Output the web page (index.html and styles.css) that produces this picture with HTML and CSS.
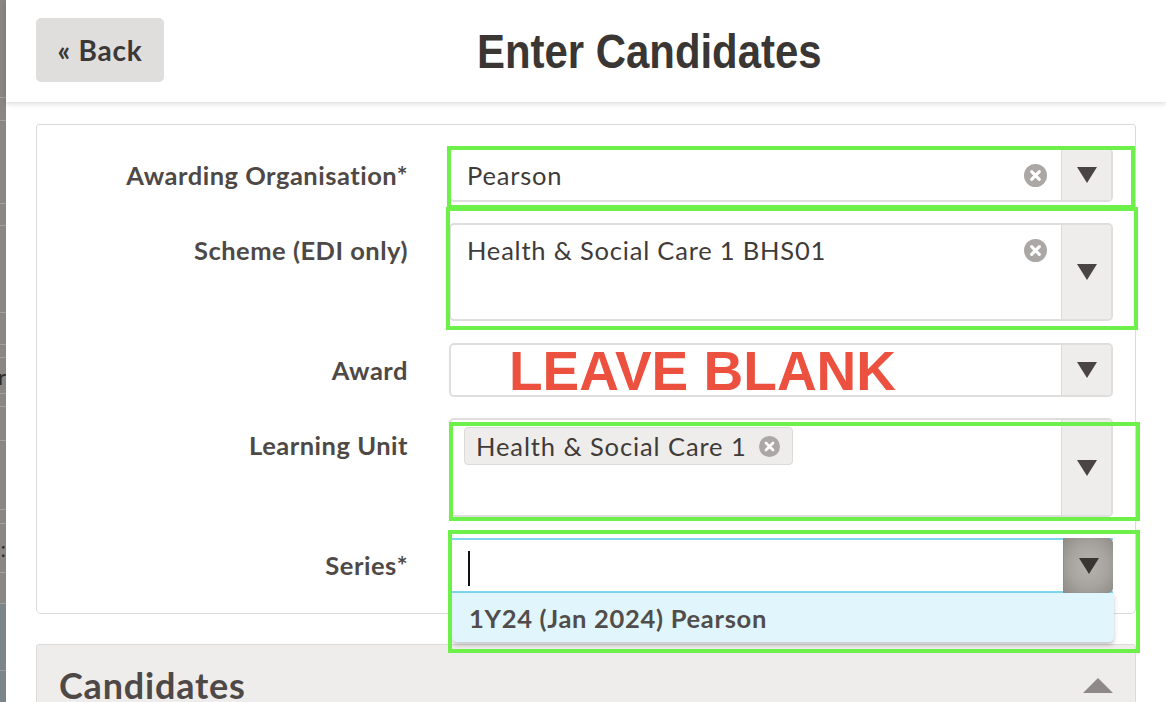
FILE: index.html
```html
<!DOCTYPE html>
<html lang="en">
<head>
<meta charset="utf-8">
<title>Enter Candidates</title>
<link rel="stylesheet" href="styles.css">
</head>
<body>
<div class="strip">
  <div class="strip-row h98"></div>
  <div class="strip-row h23"></div>
  <div class="strip-row h83"></div>
  <div class="strip-row h22"></div>
  <div class="strip-row h87"></div>
  <div class="strip-row h32"></div>
  <div class="strip-row h13"></div>
  <div class="strip-row h36 txt"><span>Order</span></div>
  <div class="strip-row h13"></div>
  <div class="strip-row h34"></div>
  <div class="strip-row h69"></div>
  <div class="strip-row h14"></div>
  <div class="strip-row h49 txt"><span>Status:</span></div>
  <div class="strip-row h31"></div>
  <div class="strip-row blue h67"></div>
  <div class="strip-row blue rest"></div>
</div>

<div class="main">
  <header class="topbar">
    <a class="back" href="#">« Back</a>
    <h1 class="title">Enter Candidates</h1>
  </header>

  <div class="content">
    <section class="panel form">
      <div class="row">
        <label class="label">Awarding Organisation*</label>
        <div class="select h54">
          <span class="value">Pearson</span>
          <span class="clear"><svg viewBox="0 0 24 24" width="23" height="23"><circle cx="12" cy="12" r="12" fill="#aaa7a4"/><path d="M8 8 L16 16 M16 8 L8 16" stroke="#fff" stroke-width="3.2" stroke-linecap="round"/></svg></span>
          <span class="arrow"><svg viewBox="0 0 20 16" width="20" height="16"><polygon points="0,0 20,0 10,16" fill="#4a4543"/></svg></span>
        </div>
      </div>

      <div class="row">
        <label class="label">Scheme (EDI only)</label>
        <div class="select h98">
          <span class="value">Health &amp; Social Care 1 BHS01</span>
          <span class="clear"><svg viewBox="0 0 24 24" width="23" height="23"><circle cx="12" cy="12" r="12" fill="#aaa7a4"/><path d="M8 8 L16 16 M16 8 L8 16" stroke="#fff" stroke-width="3.2" stroke-linecap="round"/></svg></span>
          <span class="arrow"><svg viewBox="0 0 20 16" width="20" height="16"><polygon points="0,0 20,0 10,16" fill="#4a4543"/></svg></span>
        </div>
      </div>

      <div class="row gap-plus">
        <label class="label">Award</label>
        <div class="select h54">
          <span class="value"></span>
          <span class="arrow"><svg viewBox="0 0 20 16" width="20" height="16"><polygon points="0,0 20,0 10,16" fill="#4a4543"/></svg></span>
        </div>
      </div>

      <div class="row">
        <label class="label">Learning Unit</label>
        <div class="select h99">
          <span class="value tags">
            <span class="tag">Health &amp; Social Care 1
              <svg class="tag-x" viewBox="0 0 24 24" width="21" height="21"><circle cx="12" cy="12" r="12" fill="#aaa7a4"/><path d="M8 8 L16 16 M16 8 L8 16" stroke="#fff" stroke-width="3.2" stroke-linecap="round"/></svg>
            </span>
          </span>
          <span class="arrow"><svg viewBox="0 0 20 16" width="20" height="16"><polygon points="0,0 20,0 10,16" fill="#4a4543"/></svg></span>
        </div>
      </div>

      <div class="row">
        <label class="label">Series*</label>
        <div class="select h55 focused">
          <span class="value"><span class="cursor"></span></span>
          <span class="arrow open"><svg viewBox="0 0 20 16" width="20" height="16"><polygon points="0,0 20,0 10,16" fill="#393533"/></svg></span>
          <div class="dropdown">1Y24 (Jan 2024) Pearson</div>
        </div>
      </div>
    </section>

    <section class="panel candidates">
      <h2 class="cand-title">Candidates</h2>
      <svg class="up" viewBox="0 0 30 15" width="30" height="15"><polygon points="15,0 30,15 0,15" fill="#8e8986"/></svg>
    </section>
  </div>
</div>

<div class="note note-text">LEAVE BLANK</div>
<div class="note box b1"></div>
<div class="note box b2"></div>
<div class="note box b3"></div>
<div class="note box b4"></div>
</body>
</html>
```

FILE: styles.css
```css
html, body {
  margin: 0;
  padding: 0;
  background: #ffffff;
}
body {
  position: relative;
  display: flex;
  width: 1166px;
  height: 702px;
  overflow: hidden;
  font-family: "Lato", "Noto Sans", sans-serif;
  color: #3f3b39;
}

/* left strip (page behind) */
.strip {
  flex: 0 0 6px;
  width: 6px;
  display: flex;
  flex-direction: column;
  background: #8a8683;
  overflow: hidden;
}
.strip-row {
  flex: 0 0 auto;
  border-bottom: 1px solid #a3a09d;
  box-sizing: border-box;
  position: relative;
  overflow: hidden;
}
.strip-row.blue { background: #7c8589; border-bottom-color: #959da0; }
.strip-row.rest { flex: 1 1 auto; border-bottom: none; }
.strip-row.txt span {
  position: absolute;
  right: 0;
  top: 50%;
  transform: translateY(-50%);
  font-size: 22px;
  color: #2f2c2b;
  white-space: nowrap;
}
.h13 { height: 13px; } .h14 { height: 14px; } .h22 { height: 22px; }
.h23 { height: 23px; } .h31 { height: 31px; } .h32 { height: 32px; }
.h34 { height: 34px; } .h36 { height: 36px; } .h49 { height: 49px; }
.h67 { height: 67px; } .h69 { height: 69px; } .h83 { height: 83px; }
.h87 { height: 87px; } .h98 { height: 98px; }

.main {
  flex: 1 1 auto;
  display: flex;
  flex-direction: column;
  min-width: 0;
}

/* header */
.topbar {
  height: 102px;
  flex: 0 0 102px;
  display: flex;
  align-items: center;
  padding-left: 30px;
  background: #fff;
  box-shadow: 0 2px 5px rgba(0, 0, 0, 0.14);
  position: relative;
  z-index: 1;
}
.back {
  width: 128px;
  height: 64px;
  display: flex;
  align-items: center;
  justify-content: center;
  background: #dfdedd;
  border-radius: 5px;
  color: #3b3837;
  font-weight: 700;
  font-size: 28px;
  letter-spacing: 0.8px;
  text-decoration: none;
  margin-top: -2px;
}
.title {
  margin: 0 0 0 313px;
  font-family: "Liberation Sans", Arial, sans-serif;
  font-weight: 700;
  font-size: 49px;
  color: #3a3634;
  white-space: nowrap;
  transform: scaleX(0.855);
  transform-origin: left center;
}

/* content */
.content {
  padding: 22px 30px 0 30px;
  display: flex;
  flex-direction: column;
  gap: 30px;
}
.panel {
  border: 1px solid #dcdbda;
  border-radius: 3px 3px 5px 5px;
  box-sizing: border-box;
}
.form {
  padding: 23px 0 20px 0;
  display: flex;
  flex-direction: column;
  gap: 21px;
}
.row {
  display: grid;
  grid-template-columns: 371px 664px;
  column-gap: 41px;
  align-items: start;
}
.row.gap-plus { margin-top: 1px; }
.label {
  text-align: right;
  font-weight: 700;
  font-size: 25.5px;
  letter-spacing: 0.5px;
  line-height: 53px;
  padding-top: 1px;
  color: #4e4946;
}

.select {
  position: relative;
  display: flex;
  box-sizing: border-box;
  border: 2px solid #dfdedd;
  border-radius: 5px;
  background: #fff;
}
.select.h54 { height: 54px; }
.select.h55 { height: 55px; }
.select.h98 { height: 98px; }
.select.h99 { height: 99px; }

.value {
  flex: 1 1 auto;
  padding-left: 16px;
  font-size: 25.5px;
  letter-spacing: 0.8px;
  line-height: 50px;
  color: #3f3b39;
}
.clear {
  flex: 0 0 auto;
  height: 50px;
  display: flex;
  align-items: center;
  margin-right: 14px;
}
.arrow {
  flex: 0 0 49px;
  display: flex;
  align-items: center;
  justify-content: center;
  background: #eeedec;
  border-left: 1px solid #dcdbda;
  border-radius: 0 3px 3px 0;
}

.tags { padding-left: 13px; line-height: normal; }
.tag {
  display: inline-flex;
  align-items: center;
  gap: 12px;
  height: 38px;
  box-sizing: border-box;
  margin-top: 7px;
  padding: 0 12px 0 11px;
  background: #eeedec;
  border: 1px solid #dcdbda;
  border-radius: 4px;
  font-size: 25.5px;
  letter-spacing: 0.9px;
  color: #3f3b39;
}

.focused {
  border-color: #7fd5ee;
  border-right: none;
  border-radius: 0;
}
.cursor {
  display: inline-block;
  width: 2px;
  height: 35px;
  background: #111;
  vertical-align: middle;
}
.focused .value { padding-left: 17px; }
.arrow.open {
  margin: -2px 0;
  border-left: 1px solid #8f8b88;
  border-radius: 0 5px 5px 0;
  background: radial-gradient(ellipse at center, #b7b3af 0%, #a7a39f 55%, #8f8b87 100%);
}
.dropdown {
  position: absolute;
  top: calc(100% + 2px);
  left: 1px;
  right: -1px;
  height: 49px;
  background: #e0f6fc;
  border-radius: 0 0 5px 5px;
  box-shadow: 0 3px 4px rgba(0, 0, 0, 0.22);
  padding-left: 17px;
  font-weight: 700;
  font-size: 25.5px;
  letter-spacing: 0.7px;
  line-height: 51px;
  color: #524d4a;
  z-index: 2;
}

/* candidates */
.candidates {
  background: #eeedec;
  height: 80px;
  display: flex;
  justify-content: space-between;
  align-items: flex-start;
  padding: 20px 22px 0 22px;
}
.cand-title {
  margin: 0;
  font-size: 36px;
  letter-spacing: 0.8px;
  line-height: 40px;
  font-weight: 700;
  color: #4e4946;
}
.up { margin-top: 13px; }

/* annotations */
.note { position: absolute; }
.note-text {
  left: 509px;
  top: 344px;
  font-family: "Liberation Sans", Arial, sans-serif;
  font-weight: 700;
  font-size: 55px;
  line-height: 54px;
  color: #ec5140;
  z-index: 5;
}
.box {
  border: 4px solid #6ef04b;
  box-sizing: border-box;
  z-index: 6;
}
.b1 { left: 447px; top: 146px; width: 688px; height: 63px; }
.b2 { left: 446px; top: 207px; width: 692px; height: 123px; }
.b3 { left: 449px; top: 422px; width: 691px; height: 99px; }
.b4 { left: 448px; top: 530px; width: 692px; height: 123px; }
```
